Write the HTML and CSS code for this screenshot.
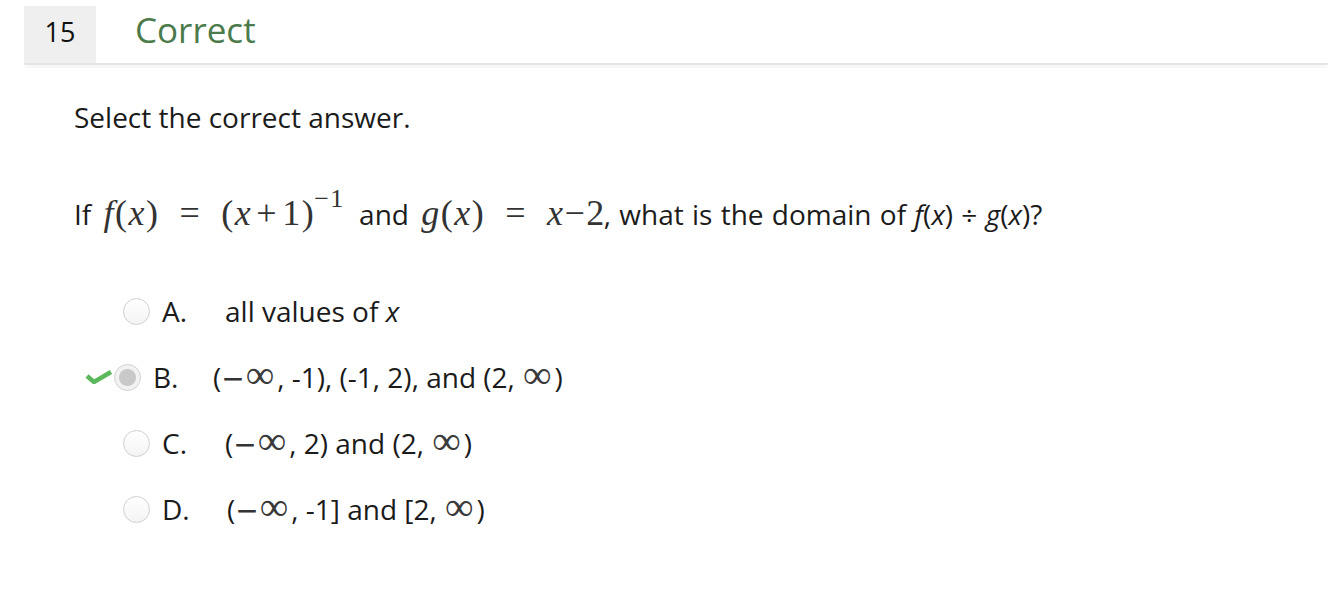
FILE: index.html
```html
<!DOCTYPE html>
<html>
<head>
<meta charset="utf-8">
<link rel="stylesheet" href="styles.css">
</head>
<body>
<div class="header">
  <div class="qnum">15</div>
  <div class="status">Correct</div>
</div>
<div class="content">
  <p class="prompt">Select the correct answer.</p>
  <p class="question">If <span class="math"><i>f</i>(<i>x</i>)<span class="eq">=</span>(<i>x</i><span class="op">+</span>1)<sup>−1</sup></span> and <span class="math math-last"><i>g</i>(<i>x</i>)<span class="eq">=</span><i>x</i>−2</span>, what is the domain of <i>f</i>(<i>x</i>) ÷ <i>g</i>(<i>x</i>)?</p>
  <div class="options">
    <div class="option">
      <span class="radio"></span>
      <span class="letter">A.</span>
      <span class="text">all values of <i>x</i></span>
    </div>
    <div class="option option-selected">
      <svg class="check" width="28" height="14" viewBox="0 0 28 14"><path d="M2 6 L9 12 L26 2" fill="none" stroke="#5cb85c" stroke-width="4.5" stroke-linejoin="miter"/></svg>
      <span class="radio radio-checked"></span>
      <span class="letter">B.</span>
      <span class="text">(<span class="minus">−</span><span class="inf">∞</span>, -1), (-1, 2), and (2, <span class="inf">∞</span>)</span>
    </div>
    <div class="option">
      <span class="radio"></span>
      <span class="letter">C.</span>
      <span class="text">(<span class="minus">−</span><span class="inf">∞</span>, 2) and (2, <span class="inf">∞</span>)</span>
    </div>
    <div class="option">
      <span class="radio"></span>
      <span class="letter">D.</span>
      <span class="text text-d">(<span class="minus">−</span><span class="inf">∞</span>, -1] and [2, <span class="inf">∞</span>)</span>
    </div>
  </div>
</div>
</body>
</html>
```

FILE: styles.css
```css
html, body {
  margin: 0;
  padding: 0;
  background: #ffffff;
}
body {
  font-family: "Open Sans", "Noto Sans", sans-serif;
  color: #1b1b1b;
}
.header {
  display: flex;
  margin: 6px 0 0 24px;
  border-bottom: 2px solid #e5e5e5;
  box-shadow: 0 4px 0 -1px #f7f7f7;
  height: 57px;
}
.qnum {
  width: 72px;
  height: 57px;
  box-sizing: border-box;
  background: #efefef;
  font-size: 27px;
  line-height: 36px;
  padding-top: 8px;
  text-align: center;
  color: #111;
}
.status {
  margin-left: 39px;
  font-size: 35px;
  line-height: 48px;
  color: #4b7a4b;
}
.content {
  padding-left: 74px;
}
.prompt {
  margin: 33px 0 0 0;
  font-size: 28px;
  line-height: 38px;
}
.question {
  margin: 58px 0 0 0;
  font-size: 28px;
  line-height: 40px;
  word-spacing: 1px;
}
.question i {
  font-style: italic;
}
.math {
  font-family: "Liberation Serif", "DejaVu Serif", serif;
  font-size: 36px;
  line-height: 30px;
  color: #333;
  letter-spacing: 1.5px;
  word-spacing: 0;
  margin: 0 6px 0 4px;
}
.math-last {
  margin-right: -2px;
}
.math i {
  font-family: "Liberation Serif", serif;
}
.math .eq {
  margin: 0 20px;
}
.math .op {
  margin: 0 4px;
}
.math sup {
  font-size: 26px;
  line-height: 0;
  vertical-align: 18px;
  margin-left: -1px;
}
.options {
  margin-top: 44px;
}
.option {
  display: flex;
  align-items: center;
  height: 66px;
  margin-left: 49px;
  font-size: 28px;
}
.option-selected {
  margin-left: 11px;
}
.check {
  margin-right: 1px;
}
.radio {
  width: 25px;
  height: 25px;
  border: 1px solid #cfcfcf;
  border-radius: 50%;
  background: linear-gradient(#ffffff, #f4f4f4);
  flex: none;
}
.radio-checked {
  background: radial-gradient(circle, #c9c9c9 0 8px, #f2f2f2 9px);
  border-color: #d0d0d0;
}
.letter {
  margin-left: 12px;
  width: 63px;
}
.option-selected .letter {
  width: 60px;
}
.text-d {
  margin-left: 2px;
}
.minus {
  font-family: "DejaVu Sans", sans-serif;
  color: #333;
}
.inf {
  font-family: "Liberation Serif", serif;
  color: #3a3a3a;
  font-size: 40px;
  line-height: 20px;
  margin: 0 3px 0 1px;
}
```
